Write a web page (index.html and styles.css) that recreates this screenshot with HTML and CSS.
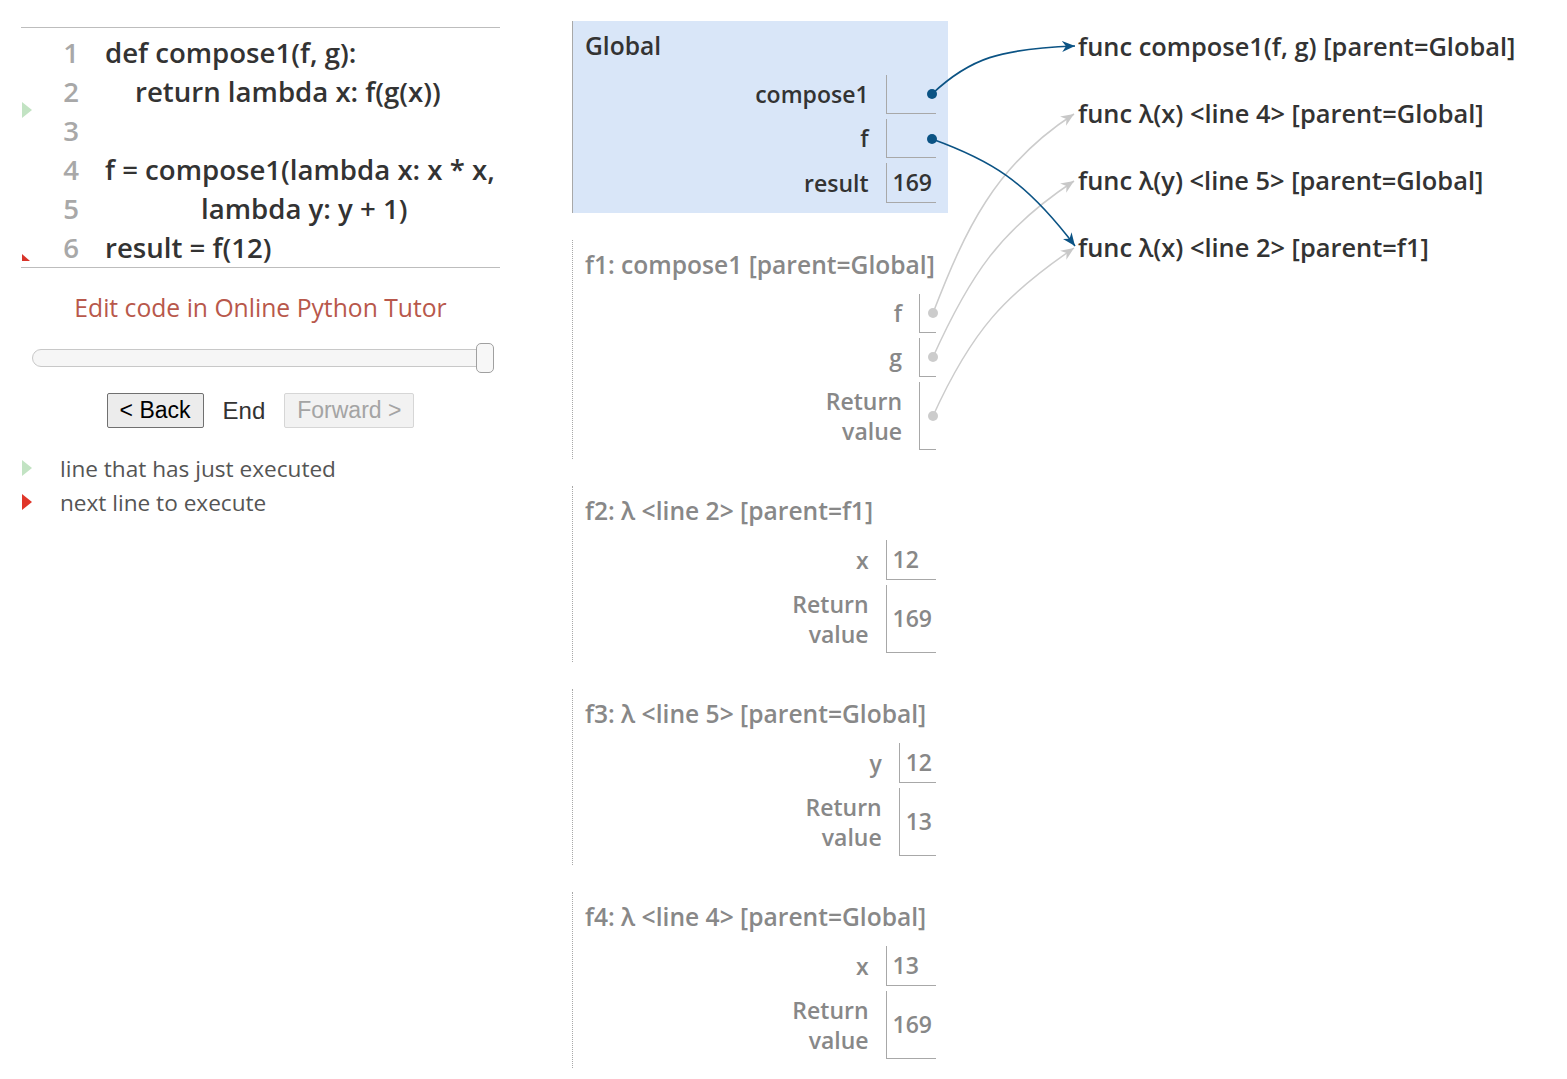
FILE: index.html
```html
<!DOCTYPE html>
<html>
<head>
<meta charset="utf-8">
<title>Python Tutor</title>
<link rel="stylesheet" href="styles.css">
</head>
<body>
<div class="page">
  <div class="left">
    <div class="codebox">
      <div class="gutter-green"></div>
      <svg class="gutter-red" width="8" height="7" viewBox="0 0 8 7"><path d="M0,0 L8,7 L0,7 Z" fill="#d8342a"/></svg>
      <div class="line"><span class="ln">1</span><span class="code">def compose1(f, g):</span></div>
      <div class="line"><span class="ln">2</span><span class="code ind1">return lambda x: f(g(x))</span></div>
      <div class="line"><span class="ln">3</span><span class="code"></span></div>
      <div class="line"><span class="ln">4</span><span class="code">f = compose1(lambda x: x * x,</span></div>
      <div class="line"><span class="ln">5</span><span class="code ind2">lambda y: y + 1)</span></div>
      <div class="line"><span class="ln">6</span><span class="code">result = f(12)</span></div>
    </div>
    <div class="editlink">Edit code in Online Python Tutor</div>
    <div class="slider">
      <div class="track"></div>
      <div class="handle"></div>
    </div>
    <div class="controls">
      <button class="btn">&lt; Back</button>
      <span class="end">End</span>
      <button class="btn disabled">Forward &gt;</button>
    </div>
    <div class="legend">
      <div class="legrow"><span class="tri green"></span><span>line that has just executed</span></div>
      <div class="legrow"><span class="tri red"></span><span>next line to execute</span></div>
    </div>
  </div>

  <div class="stack">
    <div class="frame global">
      <div class="ftitle">Global</div>
      <div class="vars">
        <div class="vname">compose1</div><div class="vval ptr"><span class="dot"></span></div>
        <div class="vname">f</div><div class="vval ptr"><span class="dot"></span></div>
        <div class="vname">result</div><div class="vval">169</div>
      </div>
    </div>
    <div class="frame">
      <div class="ftitle">f1: compose1 [parent=Global]</div>
      <div class="vars">
        <div class="vname">f</div><div class="vval ptr"><span class="dot"></span></div>
        <div class="vname">g</div><div class="vval ptr"><span class="dot"></span></div>
        <div class="vname ret">Return<br>value</div><div class="vval ptr"><span class="dot"></span></div>
      </div>
    </div>
    <div class="frame">
      <div class="ftitle">f2: λ &lt;line 2&gt; [parent=f1]</div>
      <div class="vars">
        <div class="vname">x</div><div class="vval">12</div>
        <div class="vname ret">Return<br>value</div><div class="vval">169</div>
      </div>
    </div>
    <div class="frame">
      <div class="ftitle">f3: λ &lt;line 5&gt; [parent=Global]</div>
      <div class="vars">
        <div class="vname">y</div><div class="vval">12</div>
        <div class="vname ret">Return<br>value</div><div class="vval">13</div>
      </div>
    </div>
    <div class="frame">
      <div class="ftitle">f4: λ &lt;line 4&gt; [parent=Global]</div>
      <div class="vars">
        <div class="vname">x</div><div class="vval">13</div>
        <div class="vname ret">Return<br>value</div><div class="vval">169</div>
      </div>
    </div>
  </div>

  <div class="heap">
    <div class="obj">func compose1(f, g) [parent=Global]</div>
    <div class="obj">func λ(x) &lt;line 4&gt; [parent=Global]</div>
    <div class="obj">func λ(y) &lt;line 5&gt; [parent=Global]</div>
    <div class="obj">func λ(x) &lt;line 2&gt; [parent=f1]</div>
  </div>
</div>

<svg class="arrows" width="1567" height="1079" viewBox="0 0 1567 1079">
  <defs>
    <marker id="ahd" markerUnits="userSpaceOnUse" markerWidth="14" markerHeight="12" refX="13" refY="6" orient="auto">
      <path d="M0,0.5 L13,6 L0,11.5 L4,6 Z" fill="#0b5384"/>
    </marker>
    <marker id="ahg" markerUnits="userSpaceOnUse" markerWidth="14" markerHeight="12" refX="13" refY="6" orient="auto">
      <path d="M0,0.5 L13,6 L0,11.5 L4,6 Z" fill="#c8c8c8"/>
    </marker>
  </defs>
  <path d="M933,313 C965,230 995,165 1074,114" fill="none" stroke="#cccccc" stroke-width="1.5" marker-end="url(#ahg)"/>
  <path d="M933,357 C970,275 1000,230 1074,181" fill="none" stroke="#cccccc" stroke-width="1.5" marker-end="url(#ahg)"/>
  <path d="M933,416 C972,330 1005,295 1074,248" fill="none" stroke="#cccccc" stroke-width="1.5" marker-end="url(#ahg)"/>
  <path d="M932,94 C970,58 1000,49 1075,46" fill="none" stroke="#0b5384" stroke-width="1.6" marker-end="url(#ahd)"/>
  <path d="M932,139 C990,160 1025,180 1075,246" fill="none" stroke="#0b5384" stroke-width="1.6" marker-end="url(#ahd)"/>
  <circle cx="932" cy="94" r="5" fill="#0b5384"/>
  <circle cx="932" cy="139" r="5" fill="#0b5384"/>
  <circle cx="933" cy="313" r="5" fill="#cccccc"/>
  <circle cx="933" cy="357" r="5" fill="#cccccc"/>
  <circle cx="933" cy="416" r="5" fill="#cccccc"/>
</svg>
</body>
</html>
```

FILE: styles.css
```css
html, body {
  margin: 0;
  padding: 0;
  background: #ffffff;
}
body {
  font-family: "Open Sans", "Noto Sans", "DejaVu Sans", sans-serif;
  font-weight: 600;
  color: #333;
  width: 1567px;
  height: 1079px;
  overflow: hidden;
  position: relative;
}
.page {
  display: flex;
  align-items: flex-start;
  padding: 21px 0 0 21px;
}

/* left column */
.left {
  width: 479px;
  padding-top: 6px;
}
.codebox {
  position: relative;
  border-top: 1px solid #bdbdbd;
  border-bottom: 1px solid #bdbdbd;
  padding: 5px 0 0 0;
}
.line {
  display: flex;
  height: 39px;
  line-height: 39px;
  font-size: 27.6px;
  white-space: pre;
}
.ln {
  width: 58px;
  text-align: right;
  color: #a8a8a8;
}
.code {
  padding-left: 26px;
  color: #333;
}
.code.ind1 { padding-left: 56px; }
.code.ind2 { padding-left: 122px; }
.gutter-green {
  position: absolute;
  left: 1px;
  top: 74px;
  width: 0;
  height: 0;
  border-top: 8px solid transparent;
  border-bottom: 8px solid transparent;
  border-left: 10px solid #c2e3c3;
}
.gutter-red {
  position: absolute;
  left: 1px;
  top: 226px;
}
.editlink {
  margin-top: 25px;
  text-align: center;
  font-size: 24.7px;
  font-weight: 400;
  line-height: 30px;
  color: #b8584b;
}
.slider {
  position: relative;
  margin: 20px 0 0 11px;
  width: 462px;
  height: 30px;
}
.track {
  position: absolute;
  left: 0;
  right: 2px;
  top: 6px;
  height: 16px;
  border: 1px solid #c8c8c8;
  border-radius: 9px;
  background: #f6f6f6;
}
.handle {
  position: absolute;
  right: 0;
  top: 0;
  width: 16px;
  height: 28px;
  border: 1px solid #a0a0a0;
  border-radius: 5px;
  background: #f7f7f7;
}
.controls {
  margin-top: 20px;
  display: flex;
  justify-content: center;
  align-items: center;
  gap: 19px;
  font-family: "Liberation Sans", Arial, sans-serif;
  font-weight: 400;
}
.btn {
  font-family: "Liberation Sans", Arial, sans-serif;
  font-size: 23px;
  height: 35px;
  padding: 0 12px;
  border: 1px solid #707070;
  border-radius: 2px;
  background: #ececec;
  color: #000;
}
.btn.disabled {
  border-color: #d6d6d6;
  background: #f2f2f2;
  color: #a4a4a4;
}
.end {
  font-size: 24px;
  color: #333;
}
.legend {
  margin-top: 23px;
}
.legrow {
  display: flex;
  align-items: center;
  height: 34px;
  font-size: 22.6px;
  font-weight: 400;
  color: #555;
}
.tri {
  width: 0;
  height: 0;
  margin-left: 1px;
  margin-right: 28px;
  border-top: 8px solid transparent;
  border-bottom: 8px solid transparent;
  border-left: 10px solid #c2e3c3;
}
.tri.red {
  border-left-color: #e0362a;
}

/* stack */
.stack {
  margin-left: 72px;
  width: 376px;
}
.frame {
  padding: 10px 12px 9px 12px;
  border-left: 1px dotted #a8a8a8;
  margin-bottom: 27px;
  color: #888;
}
.frame.global {
  background: #d9e6f8;
  border-left: 1px solid #a8a8a8;
  padding-bottom: 10px;
  color: #333;
}
.ftitle {
  font-size: 24.6px;
  line-height: 30px;
  margin-bottom: 14px;
  white-space: nowrap;
}
.vars {
  display: grid;
  grid-template-columns: auto auto;
  justify-content: end;
  row-gap: 5px;
  font-size: 23px;
  font-weight: 600;
}
.vname {
  text-align: right;
  padding-right: 17px;
  line-height: 39px;
  align-self: center;
}
.vname.ret {
  line-height: 30px;
  padding-top: 4px;
  padding-bottom: 4px;
}
.vval {
  border-left: 1px solid #a8a8a8;
  border-bottom: 1px solid #a8a8a8;
  padding: 0 4px 0 6px;
  line-height: 39px;
  display: flex;
  align-items: center;
  font-weight: 600;
}
.vval.ptr {
  justify-content: flex-end;
  padding: 0;
}
.dot {
  display: inline-block;
  width: 10px;
  height: 10px;
  margin-left: 9px;
  margin-right: -3px;
  visibility: hidden;
}

/* heap */
.heap {
  margin-left: 130px;
  padding-top: 10px;
  display: flex;
  flex-direction: column;
  gap: 37px;
}
.obj {
  font-size: 25.4px;
  line-height: 30px;
  color: #333;
  white-space: nowrap;
}

.arrows {
  position: absolute;
  left: 0;
  top: 0;
  pointer-events: none;
}
```
